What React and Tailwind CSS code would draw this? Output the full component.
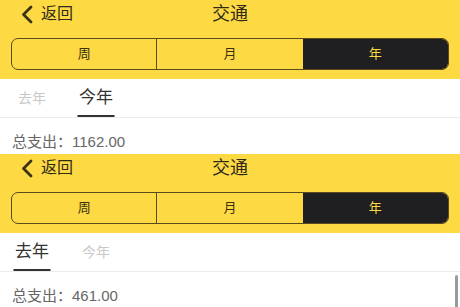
import React from "react";

const font = { fontFamily: '"Liberation Sans", "Noto Sans CJK SC", sans-serif' };

function Panel({ active, total, scroll }) {
  const tabs = ["去年", "今年"];
  return (
    <div className="relative h-[154px] w-full bg-white">
      <div className="flex h-[79px] flex-col bg-[#fdd944] px-[11px]">
        <div className="relative flex h-[28px] items-center">
          <div className="flex items-center pl-[9px]">
            <svg width="14" height="19" viewBox="0 0 14 19" className="mr-[7px]">
              <path d="M11 2 L3.5 9.5 L11 17" fill="none" stroke="#3a3215" strokeWidth="2.8" strokeLinecap="round" strokeLinejoin="round" />
            </svg>
            <span className="text-[16px] leading-none text-[#2f2a18]">返回</span>
          </div>
          <div className="absolute inset-x-0 top-0 flex h-[28px] items-center justify-center text-[18px] text-[#2f2a18]">交通</div>
        </div>
        <div className="mt-[10px] grid h-[32px] grid-cols-3 overflow-hidden rounded-[7px] border border-[#5a4a1e]">
          <div className="flex items-center justify-center border-r border-[#5a4a1e] text-[13px] text-[#3a3215]">周</div>
          <div className="flex items-center justify-center text-[13px] text-[#3a3215]">月</div>
          <div className="flex items-center justify-center bg-[#1f1f21] text-[13px] text-[#fdd944]">年</div>
        </div>
      </div>
      <div className="flex h-[39px] border-b border-[#ececec]">
        {tabs.map((t, i) => (
          <div key={t} className="relative flex w-[64px] items-center justify-center">
            <span className={i === active ? "text-[17px] text-[#333]" : "text-[14px] text-[#c8c8c8]"}>{t}</span>
            {i === active && <div className="absolute bottom-0 left-1/2 h-[2px] w-[37px] -translate-x-1/2 bg-[#333]" />}
          </div>
        ))}
      </div>
      <div className="px-[12px] pt-[14px] text-[15px] leading-[20px] text-[#666]">总支出：{total}</div>
      {scroll && <div className="absolute right-[2px] top-[121px] h-[40px] w-[3px] rounded-full bg-[#9a9a9a]" />}
    </div>
  );
}

export default function App() {
  return (
    <div className="h-[307px] w-[460px] overflow-hidden bg-white" style={font}>
      <Panel active={1} total="1162.00" />
      <Panel active={0} total="461.00" scroll />
    </div>
  );
}
